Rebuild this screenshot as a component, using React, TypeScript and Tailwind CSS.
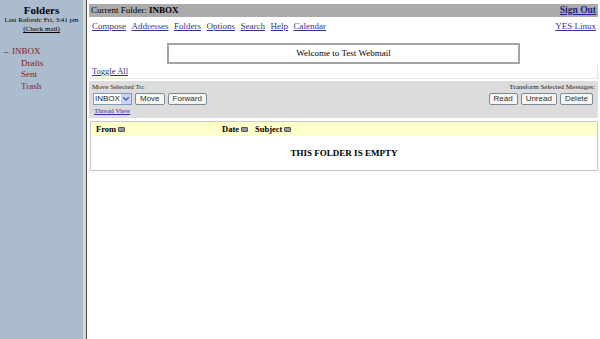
import React from 'react';

const serif = "font-['Liberation_Serif',serif]";
const sans = "font-['Liberation_Sans',sans-serif]";

const navLinks = ['Compose', 'Addresses', 'Folders', 'Options', 'Search', 'Help', 'Calendar'];
const folders = ['Drafts', 'Sent', 'Trash'];

function SortIcon() {
  return <span className="inline-block w-[7px] h-[5px] ml-[2px] rounded-[1px] bg-[#9a9a9a] border border-[#555]" />;
}

function Btn({ label }: { label: string }) {
  return (
    <button
      className={`${sans} h-[12px] px-[4px] text-[8px] leading-[10px] text-[#333] bg-[#f6f6f2] border border-[#7b8a98] rounded-[2px]`}
    >
      {label}
    </button>
  );
}

export default function App() {
  return (
    <div className={`${serif} flex w-[600px] h-[339px] overflow-hidden bg-white text-black`}>
      {/* left frame */}
      <div className="w-[83px] shrink-0 bg-[#aabccd] pt-[5px]">
        <div className="text-center text-[11px] leading-[10px] font-bold">Folders</div>
        <div className="text-center text-[7px] leading-[9px] mt-[1px]">Last Refresh: Fri, 3:41 pm</div>
        <div className="text-center text-[7px] leading-[9px] underline">(Check mail)</div>
        <div className="mt-[12px] text-[9px] leading-[11.5px] text-[#8b1a1a]">
          <div className="flex">
            <span className="w-[12px] pl-[4px] text-black">–</span>
            <span>INBOX</span>
          </div>
          {folders.map((f) => (
            <div key={f} className="pl-[21px]">{f}</div>
          ))}
        </div>
      </div>
      <div className="w-[3px] shrink-0 bg-[#d6ddcf]" />
      <div className="w-[1px] shrink-0 bg-[#4a4a4a]" />

      {/* main frame */}
      <div className="flex-1 pl-[2px] pr-[2px] pt-[4px]">
        <div className="flex items-center justify-between h-[13px] bg-[#ababab] pl-[2px] pr-[2px] text-[9px] leading-[13px]">
          <span>Current Folder: <b>INBOX</b></span>
          <a className="font-bold text-[9.5px] text-[#22228a] underline">Sign Out</a>
        </div>
        <div className="flex justify-between h-[12px] mt-[3px] pl-[3px] pr-[2px] text-[9px] leading-[12px] text-[#33339a]">
          <div className="flex gap-[5.5px]">
            {navLinks.map((l) => (
              <a key={l} className="underline">{l}</a>
            ))}
          </div>
          <a className="underline">YES Linux</a>
        </div>

        <div className="flex justify-center mt-[11px]">
          <div className="w-[353px] h-[21px] border-2 border-[#a4a4a4] text-center text-[9px] leading-[17px]">
            Welcome to Test Webmail
          </div>
        </div>

        <div className="h-[14px] mt-[1px] ml-[1px] border border-t-0 border-l-0 border-[#e6e6e6] pl-[2px] text-[8.5px] leading-[13px] text-[#33339a]">
          <a className="underline">Toggle All</a>
        </div>

        <div className="mt-[2px] h-[37px] bg-[#dcdcdc] px-[3px] pt-[2px]">
          <div className="flex justify-between text-[7px] leading-[9px] text-[#222]">
            <span>Move Selected To:</span>
            <span>Transform Selected Messages:</span>
          </div>
          <div className="flex justify-between mt-[1px] pl-[1px] pr-[2px]">
            <div className="flex gap-[3px] items-center">
              <div className={`${sans} flex h-[12px] w-[39px] bg-white border border-[#7f9db9] text-[8px] leading-[10px] text-[#222]`}>
                <span className="flex-1 pl-[1px]">INBOX</span>
                <span className="w-[10px] bg-[#c3d3fd] flex items-center justify-center">
                  <svg width="6" height="4" viewBox="0 0 6 4"><path d="M0 0 L3 3 L6 0" stroke="#4d6185" strokeWidth="1.4" fill="none" /></svg>
                </span>
              </div>
              <Btn label="Move" />
              <Btn label="Forward" />
            </div>
            <div className="flex gap-[3px]">
              <Btn label="Read" />
              <Btn label="Unread" />
              <Btn label="Delete" />
            </div>
          </div>
          <div className="mt-[2px] pl-[2px] text-[7px] leading-[9px] text-[#33339a] underline">Thread View</div>
        </div>

        <div className="mt-[3px] ml-[1px] h-[50px] border border-[#c8c8c8]">
          <div className="flex items-center h-[14px] bg-[#ffffcc] pl-[5px] text-[8.5px] leading-[14px] font-bold">
            <span className="w-[126px] flex items-center">From<SortIcon /></span>
            <span className="flex items-center">Date<SortIcon /></span>
            <span className="flex items-center ml-[7px]">Subject<SortIcon /></span>
          </div>
          <div className="text-center font-bold text-[9px] leading-[11px] mt-[12px]">THIS FOLDER IS EMPTY</div>
        </div>
      </div>
    </div>
  );
}
